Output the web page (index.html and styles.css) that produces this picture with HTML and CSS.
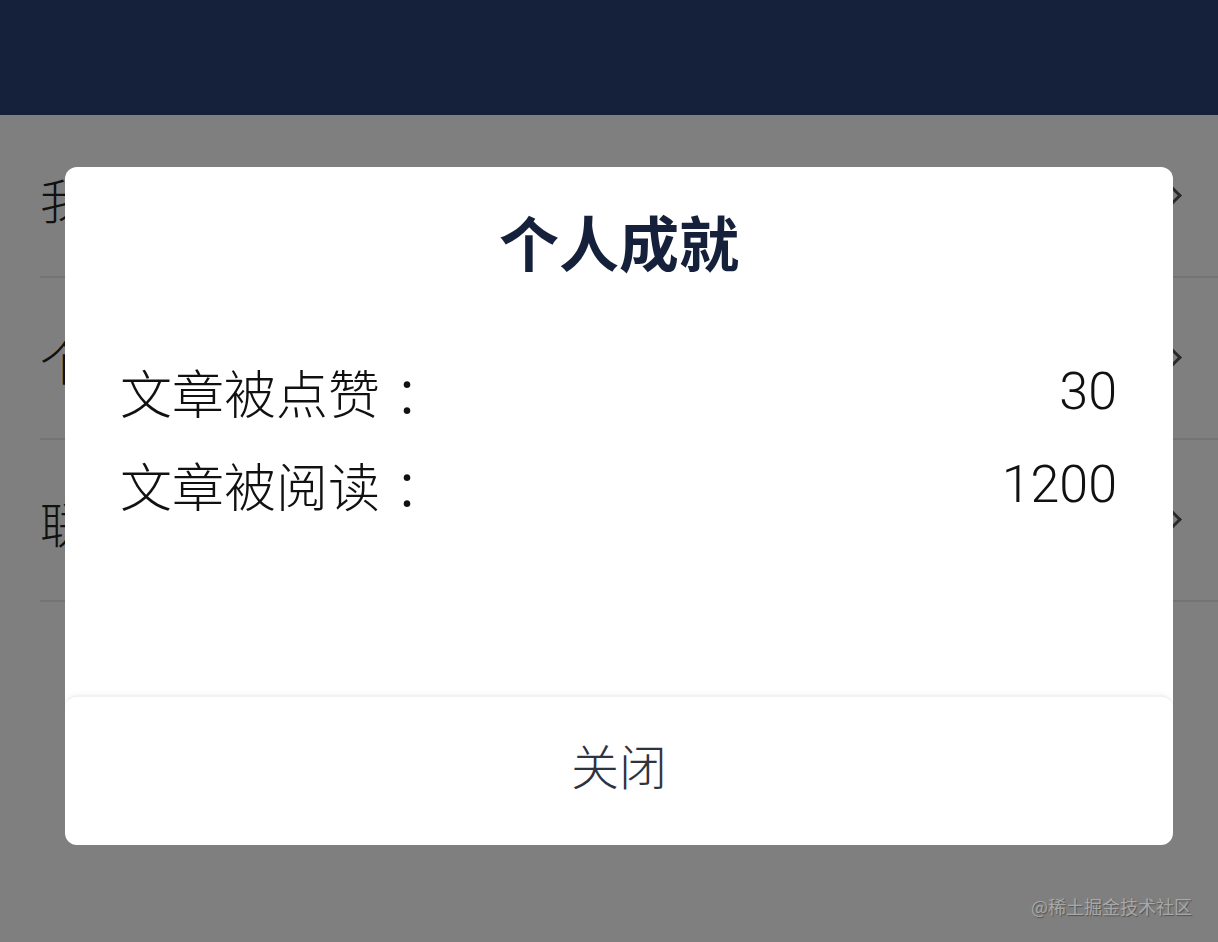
FILE: index.html
```html
<!DOCTYPE html>
<html lang="zh-CN">
<head>
<meta charset="utf-8">
<title>个人成就</title>
<link rel="stylesheet" href="styles.css">
</head>
<body>
<div class="page">
  <header class="topbar"></header>
  <ul class="menu">
    <li class="menu-item"><span class="menu-label">我的文章</span><span class="chev"></span></li>
    <li class="menu-item"><span class="menu-label">个人成就</span><span class="chev"></span></li>
    <li class="menu-item"><span class="menu-label">联系作者</span><span class="chev"></span></li>
  </ul>
</div>
<div class="mask"></div>
<div class="dialog">
  <h2 class="dialog-title">个人成就</h2>
  <div class="dialog-body">
    <div class="stat"><span class="stat-label">文章被点赞<span class="colon">：</span></span><span class="stat-value">30</span></div>
    <div class="stat"><span class="stat-label">文章被阅读<span class="colon">：</span></span><span class="stat-value">1200</span></div>
  </div>
  <div class="dialog-footer">关闭</div>
</div>
<div class="watermark">@稀土掘金技术社区</div>
</body>
</html>
```

FILE: styles.css
```css
html, body {
  margin: 0;
  padding: 0;
}
body {
  width: 1218px;
  height: 942px;
  overflow: hidden;
  background: #fff;
  font-family: "Noto Sans CJK SC", "Noto Sans", sans-serif;
  position: relative;
}
.page {
  height: 942px;
}
.topbar {
  height: 115px;
  background: #2a4374;
}
.menu {
  list-style: none;
  margin: 0;
  padding: 0 0 0 40px;
}
.menu-item {
  height: 161px;
  border-bottom: 2px solid #e8e8e8;
  display: flex;
  align-items: center;
  justify-content: space-between;
  padding-right: 18px;
  margin-top: -1px;
}
.menu-item:first-child {
  margin-top: 0;
}
.menu-label {
  font-size: 48px;
  font-weight: 300;
  color: #222;
  margin-top: 4px;
}
.chev {
  width: 16px;
  height: 16px;
  border-right: 3px solid #555;
  border-top: 3px solid #555;
  transform: rotate(45deg);
  margin-right: 22px;
}
.mask {
  position: absolute;
  inset: 0;
  background: rgba(0, 0, 0, 0.5);
}
.dialog {
  position: absolute;
  top: 167px;
  left: 65px;
  width: 1108px;
  height: 678px;
  background: #fff;
  border-radius: 12px;
  display: flex;
  flex-direction: column;
  overflow: hidden;
}
.dialog-title {
  margin: 38px 0 0;
  font-size: 60px;
  line-height: 72px;
  font-weight: 700;
  text-align: center;
  color: #15213a;
}
.dialog-body {
  flex: 1;
  padding: 68px 56px 0 55px;
}
.stat {
  display: flex;
  justify-content: space-between;
  align-items: center;
  height: 93px;
  font-size: 52px;
  font-weight: 300;
  color: #111;
}
.colon {
  margin-left: 14px;
}
.stat-value {
  font-family: "Roboto", "Liberation Sans", sans-serif;
  font-size: 52px;
  font-weight: 300;
}
.dialog-footer {
  height: 150px;
  box-sizing: border-box;
  padding-bottom: 14px;
  display: flex;
  align-items: center;
  justify-content: center;
  font-size: 48px;
  font-weight: 300;
  color: #2e3340;
  border-top: 2px solid #f2f2f2;
  border-radius: 12px 12px 0 0;
  box-shadow: 0 -2px 4px rgba(0, 0, 0, 0.03);
}
.watermark {
  position: absolute;
  right: 26px;
  top: 893px;
  font-size: 18px;
  color: #a8a8a8;
  text-shadow: 1px 1px 1px rgba(0, 0, 0, 0.35);
}
```
